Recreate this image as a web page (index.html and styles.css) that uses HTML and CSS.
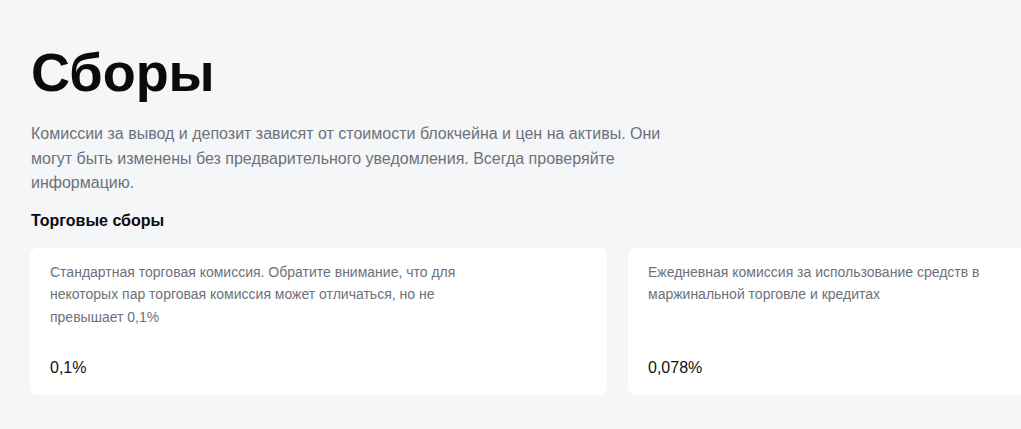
FILE: index.html
```html
<!DOCTYPE html>
<html lang="ru">
<head>
<meta charset="utf-8">
<link rel="stylesheet" href="styles.css">
</head>
<body>
<main class="page">
  <h1 class="title">Сборы</h1>
  <p class="lead">Комиссии за вывод и депозит зависят от стоимости блокчейна и цен на активы. Они могут быть изменены без предварительного уведомления. Всегда проверяйте информацию.</p>
  <h2 class="subtitle">Торговые сборы</h2>
  <div class="cards">
    <div class="card">
      <p class="card-text">Стандартная торговая комиссия. Обратите внимание, что для некоторых пар торговая комиссия может отличаться, но не превышает 0,1%</p>
      <div class="card-value">0,1%</div>
    </div>
    <div class="card">
      <p class="card-text">Ежедневная комиссия за использование средств в маржинальной торговле и кредитах</p>
      <div class="card-value">0,078%</div>
    </div>
  </div>
</main>
</body>
</html>
```
FILE: styles.css
```css
html, body {
  margin: 0;
  padding: 0;
  background: #f5f6f8;
  overflow: hidden;
}
body {
  font-family: "Liberation Sans", Arial, sans-serif;
  color: #121212;
}
.page {
  padding: 34px 0 0 30px;
}
.title {
  margin: 0 0 0 1px;
  font-size: 54px;
  line-height: 76px;
  font-weight: 700;
  color: #0b0b0e;
}
.lead {
  margin: 12px 0 0 1px;
  max-width: 650px;
  font-size: 16px;
  line-height: 24.5px;
  color: #6d717b;
}
.subtitle {
  margin: 13px 0 0 1px;
  font-size: 16px;
  line-height: 24px;
  font-weight: 700;
  color: #0b0b0e;
}
.cards {
  display: flex;
  gap: 21px;
  margin-top: 15px;
}
.card {
  flex: 0 0 577px;
  height: 147px;
  box-sizing: border-box;
  background: #ffffff;
  border-radius: 8px;
  padding: 13px 20px 0 20px;
  display: flex;
  flex-direction: column;
}
.card-text {
  margin: 0;
  max-width: 420px;
  font-size: 14px;
  line-height: 22.5px;
  color: #6d717b;
}
.card-value {
  margin-top: auto;
  margin-bottom: 16px;
  font-size: 16px;
  line-height: 22px;
  color: #121212;
}
```
